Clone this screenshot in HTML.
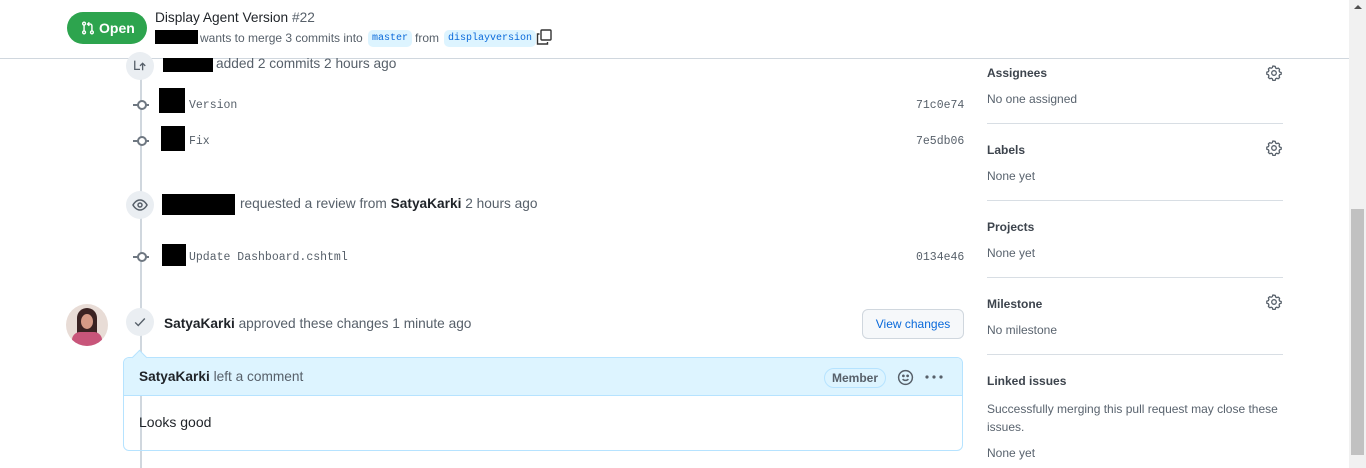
<!DOCTYPE html>
<html><head><style>
body{margin:0;width:1366px;height:468px;overflow:hidden;background:#fff;font-family:"Liberation Sans",sans-serif;color:#1f2328;position:relative}
.a{position:absolute;white-space:nowrap}
.mono{font-family:"Liberation Mono",monospace;font-size:11.5px;color:#57606a}
.blk{position:absolute;background:#000}
.muted{color:#57606a}
.t14{font-size:13.7px}
.sh{font-size:12px;font-weight:bold;color:#3d444d}
.sv{font-size:12px;color:#59636e}
.hr{position:absolute;left:987px;width:296px;height:1px;background:#d8dee4}
.node{position:absolute;width:28px;height:28px;border-radius:50%;background:#eaeef2}
.dot{position:absolute;left:133px;width:16px;height:2px;background:#6e7781}
.dot:after{content:"";position:absolute;left:4px;top:-4px;width:6px;height:6px;border:2px solid #6e7781;border-radius:50%;background:#fff}
.pill{position:absolute;top:30px;height:17px;padding:0 4px;border-radius:5px;background:#ddf4ff;color:#0969da;font-family:'Liberation Mono',monospace;font-size:10px;line-height:17px}
</style></head><body>
<div class="a" style="left:0;top:58px;width:1349px;height:1px;background:#d0d7de"></div>
<div class="a" style="left:1349px;top:0;width:17px;height:468px;background:#f1f1f1"></div>
<div class="a" style="left:1351px;top:209px;width:13px;height:246px;background:#c1c1c1"></div>
<div class="a" style="left:1354px;top:5px;border:4px solid transparent;border-bottom:4px solid #505050;border-top:0"></div>

<div class="a" style="left:67px;top:12px;width:80px;height:32px;border-radius:16px;background:#2da44e;color:#fff;font-weight:bold;font-size:14px;line-height:32px">
<svg style="position:absolute;left:14px;top:9px" width="14" height="14" viewBox="0 0 16 16" fill="none" stroke="#fff" stroke-width="1.6"><circle cx="3.5" cy="3" r="1.6"/><circle cx="3.5" cy="13" r="1.6"/><circle cx="12.5" cy="13" r="1.6"/><path d="M3.5 4.6v6.8M12.5 11.4V5.5a2 2 0 0 0-2-2H8M9.5 1.5l-2 2 2 2"/></svg>
<span style="position:absolute;left:32px">Open</span></div>
<div class="a t14" style="left:155px;top:10px;color:#1f2328">Display Agent Version <span class="muted">#22</span></div>
<div class="blk" style="left:155px;top:30px;width:43px;height:14px"></div>
<div class="a muted" style="left:200px;top:31px;font-size:12px">wants to merge 3 commits into</div>
<div class="pill" style="left:368px">master</div>
<div class="a muted" style="left:415px;top:31px;font-size:12px">from</div>
<div class="pill" style="left:444px">displayversion</div>
<svg class="a" style="left:536px;top:29px" width="16" height="16" viewBox="0 0 16 16" fill="none" stroke="#333" stroke-width="1.4"><rect x="5" y="1" width="10" height="10" rx="1"/><path d="M3.5 5H1.5v10h10v-2"/></svg>

<div class="a" style="left:140px;top:58px;width:2px;height:410px;background:#d0d7de"></div>
<div class="node" style="left:126px;top:52px"></div>
<svg class="a" style="left:133px;top:58px" width="14" height="14" viewBox="0 0 16 16" fill="none" stroke="#57606a" stroke-width="1.5"><path d="M2 3v10h6M11 14V6M8 9l3-3 3 3"/></svg>
<div class="blk" style="left:163px;top:58px;width:50px;height:14px"></div>
<div class="a muted t14" style="left:216px;top:56px">added 2 commits 2 hours ago</div>

<div class="dot" style="left:133px;top:104px"></div>
<div class="blk" style="left:159px;top:88px;width:26px;height:25px"></div>
<div class="a mono" style="left:189px;top:99px">Version</div>
<div class="a mono" style="left:916px;top:99px">71c0e74</div>
<div class="dot" style="left:133px;top:140px"></div>
<div class="blk" style="left:161px;top:126px;width:24px;height:25px"></div>
<div class="a mono" style="left:189px;top:135px">Fix</div>
<div class="a mono" style="left:916px;top:135px">7e5db06</div>

<div class="node" style="left:126px;top:191px"></div>
<svg class="a" style="left:132px;top:197px" width="16" height="16" viewBox="0 0 16 16" fill="none" stroke="#57606a" stroke-width="1.5"><path d="M1 8s2.5-5 7-5 7 5 7 5-2.5 5-7 5-7-5-7-5z"/><circle cx="8" cy="8" r="2"/></svg>
<div class="blk" style="left:162px;top:194px;width:73px;height:21px"></div>
<div class="a muted t14" style="left:240px;top:196px">requested a review from <b style="color:#1f2328">SatyaKarki</b> 2 hours ago</div>

<div class="dot" style="left:133px;top:256px"></div>
<div class="blk" style="left:162px;top:244px;width:24px;height:22px"></div>
<div class="a mono" style="left:189px;top:251px">Update Dashboard.cshtml</div>
<div class="a mono" style="left:916px;top:251px">0134e46</div>

<div class="a" style="left:66px;top:304px;width:42px;height:42px;border-radius:50%;overflow:hidden;background:#e8dcd6">
<div style="position:absolute;left:11px;top:4px;width:20px;height:34px;border-radius:10px 10px 4px 4px;background:#3a2222"></div>
<div style="position:absolute;left:15px;top:10px;width:12px;height:15px;border-radius:50%;background:#d59a86"></div>
<div style="position:absolute;left:6px;top:28px;width:30px;height:16px;border-radius:8px 8px 0 0;background:#c8557a"></div>
</div>
<div class="node" style="left:126px;top:308px"></div>
<svg class="a" style="left:133px;top:315px" width="14" height="14" viewBox="0 0 16 16" fill="none" stroke="#57606a" stroke-width="1.6"><path d="M2.5 8.5l3.5 3.5 7.5-8"/></svg>
<div class="a muted t14" style="left:164px;top:316px"><b style="color:#1f2328">SatyaKarki</b> approved these changes 1 minute ago</div>
<div class="a" style="left:862px;top:309px;width:100px;height:28px;border:1px solid #d0d7de;border-radius:6px;background:#f6f8fa;color:#0969da;font-size:12px;line-height:28px;text-align:center">View changes</div>

<div class="a" style="left:123px;top:357px;width:838px;height:92px;border:1px solid #b6e3ff;border-radius:6px;overflow:hidden">
<div style="height:37px;background:#ddf4ff;border-bottom:1px solid #b6e3ff"></div></div>
<div class="a" style="left:134px;top:352px;width:10px;height:10px;background:#ddf4ff;border-left:1px solid #b6e3ff;border-top:1px solid #b6e3ff;transform:rotate(45deg)"></div>
<div class="a muted t14" style="left:139px;top:369px"><b style="color:#1f2328">SatyaKarki</b> left a comment</div>
<div class="a" style="left:824px;top:368px;height:18px;padding:0 7px;border:1px solid #b6e3ff;border-radius:10px;font-size:12px;line-height:18px;color:#57606a;font-weight:bold">Member</div>
<svg class="a" style="left:897px;top:369px" width="17" height="17" viewBox="0 0 16 16" fill="none" stroke="#57606a" stroke-width="1.4"><circle cx="8" cy="8" r="6.5"/><path d="M5.3 9.5c1.3 1.6 4.1 1.6 5.4 0"/><circle cx="6" cy="6.5" r=".6" fill="#57606a"/><circle cx="10" cy="6.5" r=".6" fill="#57606a"/></svg>
<svg class="a" style="left:925px;top:375px" width="18" height="4" viewBox="0 0 18 4" fill="#57606a"><circle cx="2" cy="2" r="1.6"/><circle cx="9" cy="2" r="1.6"/><circle cx="16" cy="2" r="1.6"/></svg>
<div class="a" style="left:139px;top:414px;font-size:14px">Looks good</div>

<div class="a sh" style="left:987px;top:66px">Assignees</div>
<div class="a sv" style="left:987px;top:92px">No one assigned</div>
<div class="hr" style="top:123px"></div>
<div class="a sh" style="left:987px;top:143px">Labels</div>
<div class="a sv" style="left:987px;top:169px">None yet</div>
<div class="hr" style="top:200px"></div>
<div class="a sh" style="left:987px;top:220px">Projects</div>
<div class="a sv" style="left:987px;top:246px">None yet</div>
<div class="hr" style="top:277px"></div>
<div class="a sh" style="left:987px;top:297px">Milestone</div>
<div class="a sv" style="left:987px;top:323px">No milestone</div>
<div class="hr" style="top:354px"></div>
<div class="a sh" style="left:987px;top:374px">Linked issues</div>
<div class="a sv" style="left:987px;top:400px;line-height:18px;white-space:normal;width:300px">Successfully merging this pull request may close these issues.</div>
<div class="a sv" style="left:987px;top:446px">None yet</div>
<svg width="0" height="0" style="position:absolute"><defs><g id="g"><circle cx="8" cy="8" r="2.3" fill="none" stroke="#57606a" stroke-width="1.3"/><path d="M8 1.2l1.2.2.4 1.6 1.1.6 1.6-.5 1.3 1.2-.5 1.6.5 1.1 1.6.5v1.8l-1.6.5-.5 1.1.5 1.6-1.3 1.2-1.6-.5-1.1.6-.4 1.6H6.8l-.4-1.6-1.1-.6-1.6.5-1.3-1.2.5-1.6-.5-1.1-1.6-.5V7.1l1.6-.5.5-1.1-.5-1.6 1.3-1.2 1.6.5 1.1-.6.4-1.6z" fill="none" stroke="#57606a" stroke-width="1.3" stroke-linejoin="round"/></g></defs></svg>
<svg class="a" style="left:1266px;top:65px" width="16" height="16" viewBox="0 0 16 16"><use href="#g"/></svg>
<svg class="a" style="left:1266px;top:140px" width="16" height="16" viewBox="0 0 16 16"><use href="#g"/></svg>
<svg class="a" style="left:1266px;top:294px" width="16" height="16" viewBox="0 0 16 16"><use href="#g"/></svg>
</body></html>
